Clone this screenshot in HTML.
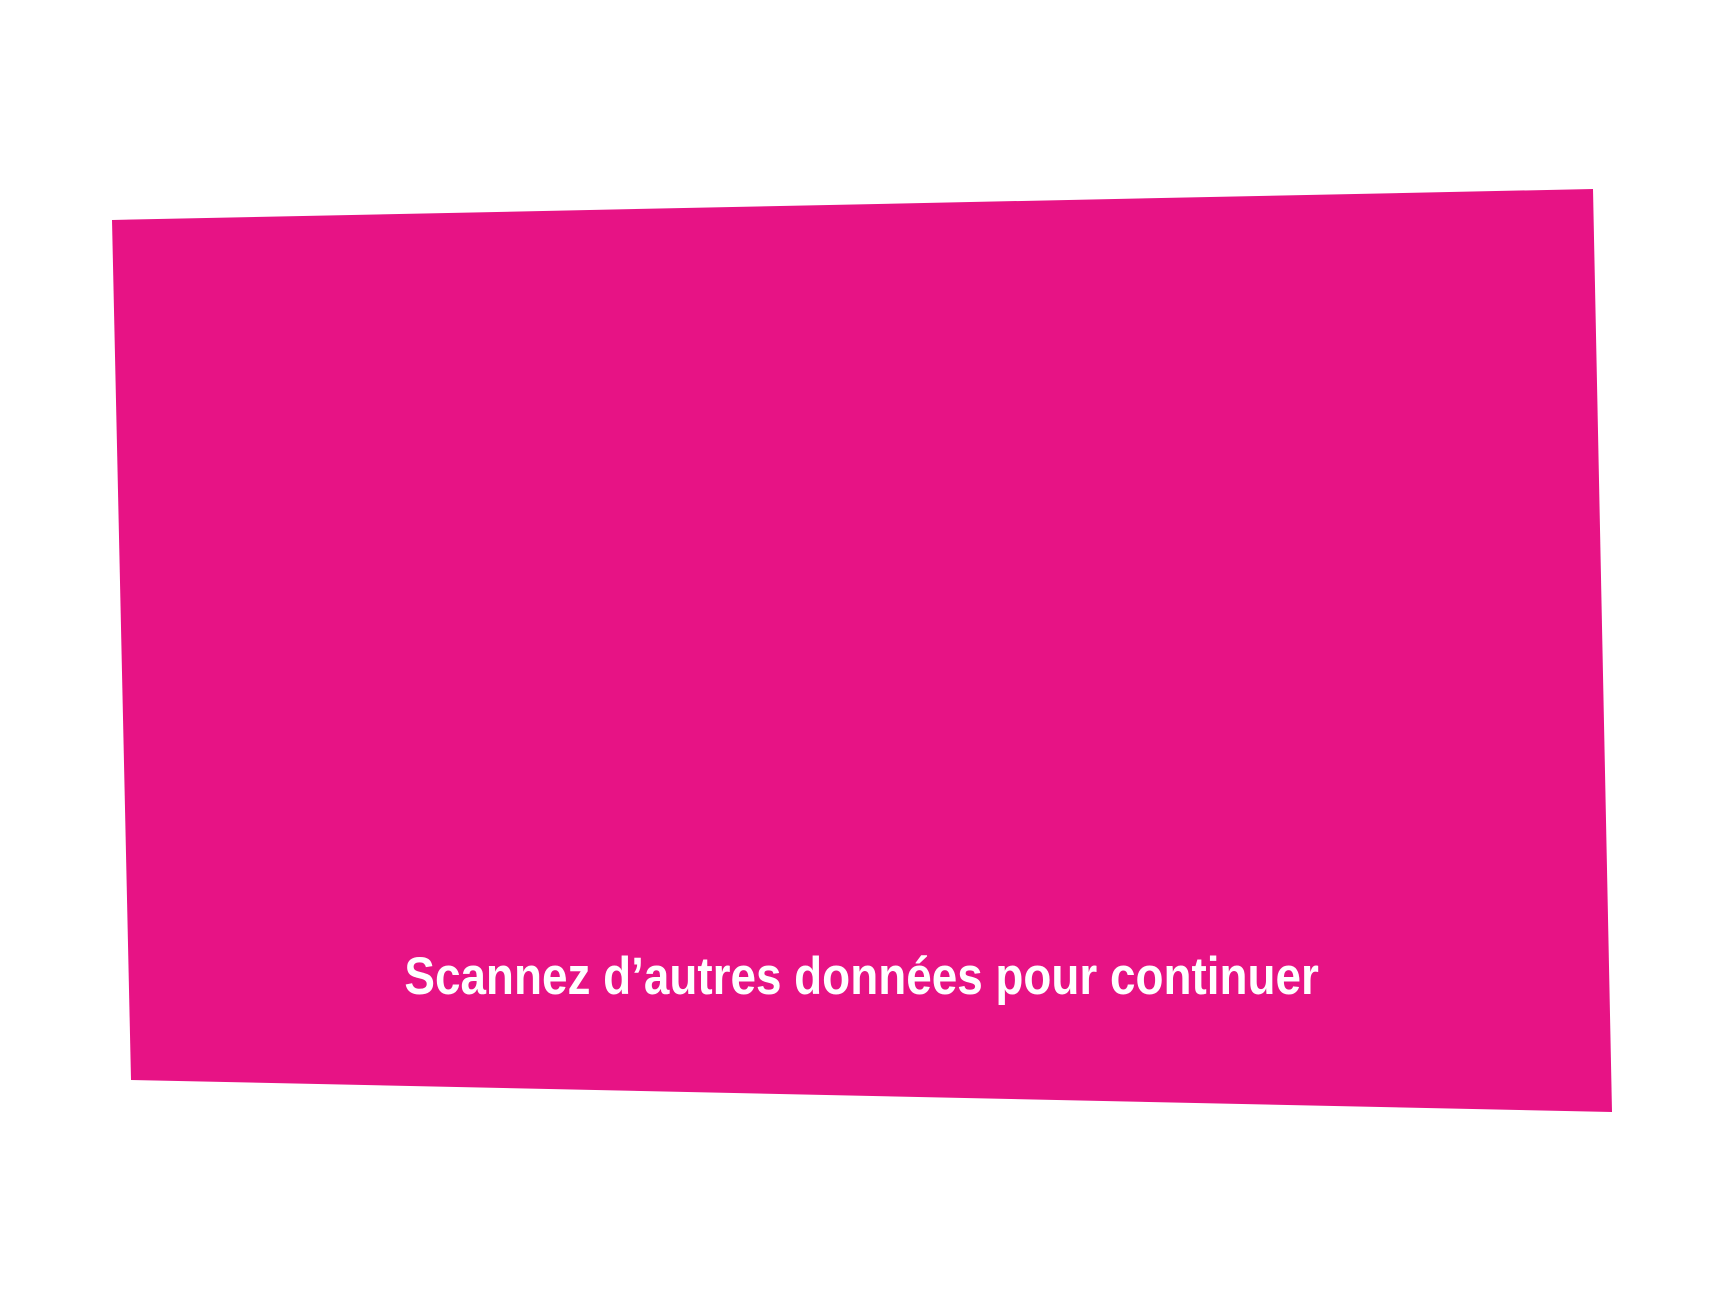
<!DOCTYPE html>
<html><head><meta charset="utf-8"><style>
html,body{margin:0;padding:0;background:#fff;width:1724px;height:1293px;overflow:hidden;position:relative}
svg{position:absolute;left:0;top:0}
.t{position:absolute;left:0;width:1724px;top:950px;text-align:center;font-family:"Liberation Sans",sans-serif;font-weight:bold;font-size:53px;line-height:53px;color:#fff;white-space:nowrap}
.t span{display:inline-block;transform:scaleX(0.865);transform-origin:center;position:relative;left:0px}
</style></head><body>
<svg width="1724" height="1293"><polygon points="112,220 1593,189 1612,1112 131,1080" fill="#e71385"/></svg>
<div class="t"><span>Scannez d’autres données pour continuer</span></div>
</body></html>
